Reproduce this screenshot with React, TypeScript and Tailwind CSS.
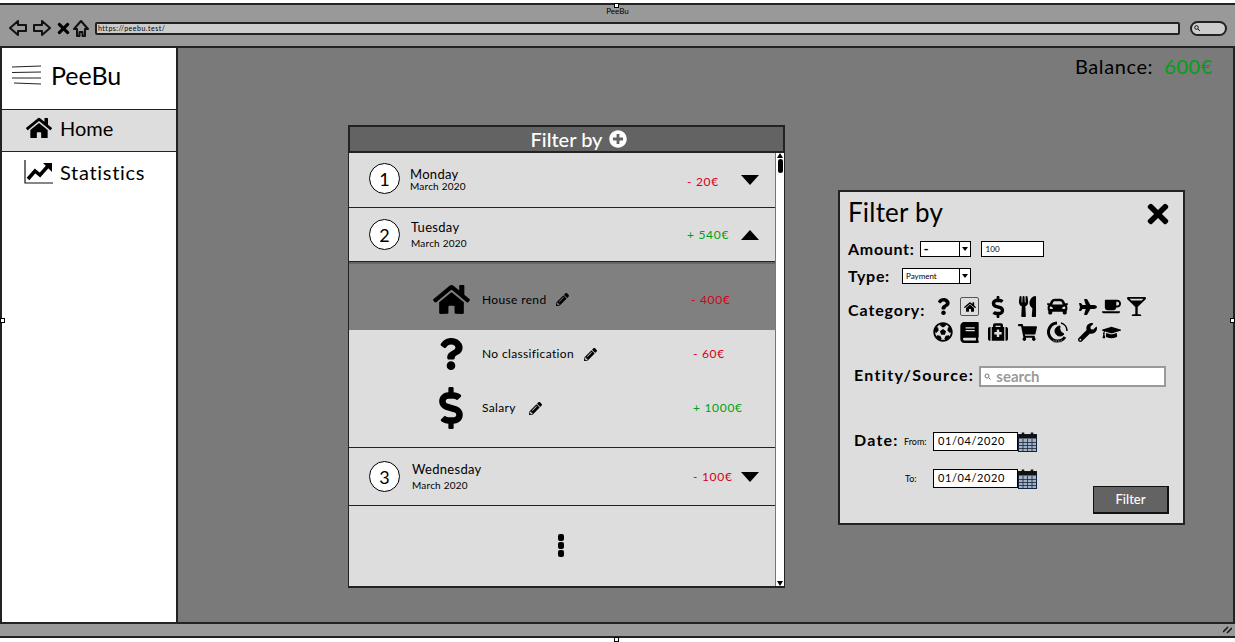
import { FaBook, FaCar, FaCoffee, FaDollarSign, FaFutbol, FaGlassMartiniAlt, FaGraduationCap, FaHome, FaMedkit, FaPencilAlt, FaPlane, FaPlusCircle, FaQuestion, FaShoppingCart, FaTimes, FaUtensils, FaWrench } from "react-icons/fa"

const font = "font-['Lato','Liberation_Sans',sans-serif]"

function Arrow({ d, w, className }: { d: string; w: number; className?: string }) {
    return (
        <svg width={w} height="22" viewBox={`0 0 ${w} 22`} fill="none" stroke="#111" strokeWidth="2" strokeLinejoin="round" className={`shrink-0 ${className ?? ""}`}>
            <path d={d} />
        </svg>
    )
}

function Chevron({ up }: { up?: boolean }) {
    return (
        <svg width="18" height="10" viewBox="0 0 18 10" className="shrink-0">
            <path d={up ? "M9 0 L18 10 L0 10 Z" : "M0 0 L18 0 L9 10 Z"} fill="#000" />
        </svg>
    )
}

function ChartIcon() {
    return (
        <svg width="30" height="24" viewBox="0 0 30 24" fill="none" className="shrink-0">
            <path d="M1 0 V23 H29" stroke="#111" strokeWidth="1.2" />
            <path d="M4 19 L11 11 L16 15 L24 6" stroke="#000" strokeWidth="3.500" />
            <path d="M19 3 H28 V12 Z" fill="#000" />
        </svg>
    )
}

function Globe() {
    return (
        <svg width="22" height="22" viewBox="0 0 22 22" fill="none" stroke="#000" className="shrink-0">
            <path d="M10 2 A9 9 0 1 0 18 16" strokeWidth="3" />
            <path d="M13 5 A5 5 0 1 0 17 13 A7 7 0 0 1 13 5 Z" fill="#000" strokeWidth="1" />
            <path d="M14 2 A8 8 0 0 1 20 10" strokeWidth="1.500" />
            <path d="M6 20 H16" strokeWidth="2.500" strokeDasharray="1.500 1" stroke="#555" />
        </svg>
    )
}

function Calendar() {
    return (
        <svg width="19" height="21" viewBox="0 0 19 21" className="shrink-0">
            <rect x="0.5" y="3.5" width="18" height="17" fill="#9fb4c8" stroke="#12233f" />
            <rect x="0.5" y="3.5" width="18" height="4" fill="#111" />
            <path d="M1 11.5H18M1 14.5H18M1 17.5H18M5 8V20M9.500 8V20M14 8V20" stroke="#223" strokeWidth="0.8" />
            <path d="M5 6V1.500M14 6V1.500" stroke="#111" strokeWidth="2.500" />
        </svg>
    )
}

type DayProps = {
    n: number
    name: string
    amount: string
    color: string
    up?: boolean
    rowClass: string
    textClass: string
    subClass: string
    circleClass: string
    amountClass: string
}

function Day({ n, name, amount, color, up, rowClass, textClass, subClass, circleClass, amountClass }: DayProps) {
    return (
        <div className={`flex shrink-0 items-center border-b border-[#222] pl-[20px] pr-[16px] ${rowClass}`}>
            <div className={`flex size-[31px] shrink-0 items-center justify-center rounded-full border border-black bg-white text-[18px] leading-none ${circleClass}`}>{n}</div>
            <div className={`flex flex-1 flex-col ${textClass}`}>
                <span className="text-[13px] leading-[15px] tracking-[0.3px]">{name}</span>
                <span className={`text-[10px] leading-[12px] tracking-[0.2px] ${subClass}`}>March 2020</span>
            </div>
            <span className={`text-[12px] tracking-[0.7px] ${color} ${amountClass}`}>{amount}</span>
            <Chevron up={up} />
        </div>
    )
}

type ItemProps = {
    icon: React.ReactNode
    label: string
    amount: string
    color: string
    active?: boolean
    className: string
    amountWidth: string
    pencilGap: string
}

function Item({ icon, label, amount, color, active, className, amountWidth, pencilGap }: ItemProps) {
    return (
        <div className={`flex shrink-0 items-center ${active ? "bg-[#808080]" : ""} ${className}`}>
            <div className="ml-[82px] flex w-[40px] shrink-0 justify-center">{icon}</div>
            <span className="ml-[11px] text-[12px] tracking-[0.35px]">{label}</span>
            <FaPencilAlt className={`shrink-0 text-[13px] ${pencilGap}`} />
            <span className={`ml-auto text-[12px] tracking-[0.7px] ${color} ${amountWidth}`}>{amount}</span>
        </div>
    )
}

function SelectBox({ text, className }: { text: string; className: string }) {
    return (
        <div className={`flex h-[16px] items-center justify-between border border-black bg-white pl-[3px] ${className}`}>
            <span className="leading-none">{text}</span>
            <div className="flex h-full w-[11px] items-center justify-center border-l border-black">
                <svg width="6" height="4" viewBox="0 0 6 4"><path d="M0 0H6L3 4Z" fill="#000" /></svg>
            </div>
        </div>
    )
}

function DateInput() {
    return (
        <div className="flex items-center">
            <div className="flex h-[19px] w-[85px] items-center border border-black bg-white pl-[4px] text-[11px] tracking-[0.6px]">01/04/2020</div>
            <Calendar />
        </div>
    )
}

function Handle({ className }: { className: string }) {
    return <div className={`absolute size-[5px] border border-black bg-white ${className}`} />
}

export default function App() {
    return (
        <div className={`relative flex h-[642px] w-[1235px] flex-col overflow-hidden bg-white pt-[3px] pb-[4px] text-black ${font}`}>
            <Handle className="top-[3px] left-[614px]" />
            <Handle className="top-[318px] left-0" />
            <Handle className="top-[318px] right-0" />
            <Handle className="bottom-0 left-[614px]" />
            <div className="flex h-[45px] shrink-0 flex-col border-y-2 border-[#222] bg-[#999999] pl-[8px] pr-[8px]">
                <div className="h-[9px] pt-[2px] text-center text-[8px] leading-[9px]">PeeBu</div>
                <div className="flex items-center pt-[3px]">
                    <Arrow w={20} d="M2 11 L10 4 V8 H18 V14 H10 V18 Z" />
                    <Arrow w={22} className="ml-[2px]" d="M20 11 L12 4 V8 H4 V14 H12 V18 Z" />
                    <FaTimes className="ml-[3px] text-[17px]" />
                    <Arrow w={18} d="M9 4 L16 12 H13 V19 H10.500 V15 H7.500 V19 H5 V12 H2 Z" />
                    <div className="ml-[5px] flex h-[13px] flex-1 items-center rounded-[2px] border-2 border-[#222] bg-[#cccccc] pl-[1px] text-[7px] tracking-[0.5px]">https://peebu.test/</div>
                    <div className="ml-[10px] flex h-[15px] w-[37px] shrink-0 items-center rounded-full border-2 border-[#222] bg-[#cccccc] pl-[2px]">
                        <svg width="6" height="6" viewBox="0 0 6 6" fill="none" stroke="#111" strokeWidth="1"><circle cx="2.500" cy="2.500" r="1.800" /><path d="M4 4L6 6" /></svg>
                    </div>
                </div>
            </div>
            <div className="flex min-h-0 flex-1 border-x-2 border-[#222]">
                <div className="flex w-[176px] shrink-0 flex-col border-r-2 border-[#222] bg-white">
                    <div className="flex h-[62px] shrink-0 items-center gap-[10px] border-b border-[#222] pb-[7px] pl-[9px]">
                        <svg width="30" height="20" viewBox="0 0 30 20" stroke="#222" strokeWidth="1" className="shrink-0">
                            <path d="M1 2 L30 1M1 7.500 L30 7M1 13 L30 13M3 18 L30 19" />
                        </svg>
                        <span className="text-[25px] leading-none">PeeBu</span>
                    </div>
                    <div className="flex h-[42px] shrink-0 items-center gap-[8px] border-b border-[#222] bg-[#dddddd] pb-[5px] pl-[24px] text-[20px]">
                        <FaHome className="text-[26px]" />
                        <span>Home</span>
                    </div>
                    <div className="flex h-[43px] shrink-0 items-center gap-[6px] pb-[4px] pl-[22px] text-[20px] tracking-[0.7px]">
                        <ChartIcon />
                        <span>Statistics</span>
                    </div>
                </div>
                <div className="flex min-w-0 flex-1 flex-col bg-[#7a7a7a]">
                    <div className="flex justify-end gap-[11px] pt-[6px] pr-[20px] text-[20px] leading-[24px] tracking-[0.6px]">
                        <span>Balance:</span>
                        <span className="text-[#00a012]">600€</span>
                    </div>
                    <div className="flex items-start">
                        <div className="ml-[170px] mt-[47px] flex h-[463px] w-[437px] shrink-0 flex-col">
                            <div className="flex h-[28px] shrink-0 items-center justify-center gap-[6px] border-2 border-[#222] bg-[#636363] pl-[24px] text-[20px] font-medium text-white">
                                <span>Filter by</span>
                                <FaPlusCircle className="text-[18px]" />
                            </div>
                            <div className="flex min-h-0 flex-1 border-x border-b-2 border-[#222] bg-[#dddddd]">
                                <div className="flex min-w-0 flex-1 flex-col">
                                    <Day n={1} name="Monday" amount="- 20€" color="text-[#d6001c]" rowClass="h-[55px]" textClass="ml-[10px] -mt-[1px]" subClass="-mt-[2px]" circleClass="-mt-[3px]" amountClass="mt-[3px] w-[54px]" />
                                    <Day n={2} name="Tuesday" amount="+ 540€" color="text-[#00a012]" up rowClass="h-[54px]" textClass="ml-[11px]" subClass="mt-[2px]" circleClass="" amountClass="w-[54px]" />
                                    <Item active className="h-[68px] border-t-2 border-[#666] pt-[5px]" icon={<FaHome className="text-[37px]" />} label="House rend" amount="- 400€" color="text-[#d6001c]" amountWidth="w-[84px]" pencilGap="ml-[10px]" />
                                    <Item className="h-[48px]" icon={<FaQuestion className="text-[32px]" />} label="No classification" amount="- 60€" color="text-[#d6001c]" amountWidth="w-[82px]" pencilGap="ml-[10px]" />
                                    <Item className="h-[60px]" icon={<FaDollarSign className="text-[42px]" />} label="Salary" amount="+ 1000€" color="text-[#00a012]" amountWidth="w-[82px]" pencilGap="ml-[13px]" />
                                    <div className="h-[10px] shrink-0 border-b border-[#222]" />
                                    <Day n={3} name="Wednesday" amount="- 100€" color="text-[#d6001c]" rowClass="h-[58px]" textClass="ml-[12px]" subClass="mt-[2px]" circleClass="" amountClass="w-[48px]" />
                                    <div className="flex flex-1 items-center justify-center pb-[2px]">
                                        <div className="ml-[-2px] flex flex-col gap-[1px]">
                                            <div className="h-[7px] w-[6px] rounded-[2px] bg-black" />
                                            <div className="h-[7px] w-[6px] rounded-[2px] bg-black" />
                                            <div className="h-[7px] w-[6px] rounded-[2px] bg-black" />
                                        </div>
                                    </div>
                                </div>
                                <div className="flex w-[9px] shrink-0 flex-col items-center justify-between border-l border-[#777] bg-white">
                                    <div className="flex flex-col items-center">
                                        <svg width="6" height="5" viewBox="0 0 6 5"><path d="M3 0L6 5H0Z" fill="#000" /></svg>
                                        <div className="mt-[1px] h-[14px] w-[5px] rounded-full bg-black" />
                                    </div>
                                    <svg width="6" height="5" viewBox="0 0 6 5"><path d="M0 0H6L3 5Z" fill="#000" /></svg>
                                </div>
                            </div>
                        </div>
                        <div className="ml-[53px] mt-[112px] flex h-[335px] w-[347px] shrink-0 flex-col border-2 border-[#222] bg-[#dddddd] pl-[8px]">
                            <div className="flex items-center justify-between pt-[3px] pr-[10px]">
                                <span className="text-[26px] leading-[28px] tracking-[0.2px]">Filter by</span>
                                <FaTimes className="mt-[4px] text-[30px]" />
                            </div>
                            <div className="mt-[11px] flex h-[18px] items-center text-[16px] font-bold tracking-[0.7px]">
                                <span>Amount:</span>
                                <SelectBox text="-" className="ml-[5px] w-[51px] text-[14px] tracking-normal" />
                                <div className="ml-[10px] flex h-[16px] w-[63px] items-center border border-black bg-white pl-[4px] text-[8px] leading-none font-normal tracking-normal">100</div>
                            </div>
                            <div className="mt-[9px] flex h-[18px] items-center text-[16px] font-bold tracking-[0.7px]">
                                <span>Type:</span>
                                <SelectBox text="Payment" className="ml-[12px] w-[69px] text-[8px] font-normal tracking-normal" />
                            </div>
                            <div className="mt-[11px] flex items-start">
                                <span className="mt-[2px] w-[85px] shrink-0 text-[16px] font-bold tracking-[0.9px]">Category:</span>
                                <div className="flex flex-col gap-[4px]">
                                    <div className="flex h-[21px] items-center">
                                        <FaQuestion className="ml-[2px] text-[17px]" />
                                        <div className="ml-[8px] flex size-[19px] items-center justify-center rounded-[2px] border border-[#555] text-[12px]"><FaHome /></div>
                                        <FaDollarSign className="ml-[8px] text-[22px]" />
                                        <FaUtensils className="ml-[8px] text-[21px]" />
                                        <FaCar className="ml-[9px] text-[21px]" />
                                        <FaPlane className="ml-[11px] text-[18px]" />
                                        <FaCoffee className="ml-[5px] text-[19px]" />
                                        <FaGlassMartiniAlt className="ml-[6px] text-[19px]" />
                                    </div>
                                    <div className="flex h-[22px] items-center">
                                        <FaFutbol className="text-[20px]" />
                                        <FaBook className="ml-[6px] text-[21px]" />
                                        <FaMedkit className="ml-[8px] text-[20px]" />
                                        <FaShoppingCart className="ml-[10px] text-[19px]" />
                                        <div className="ml-[10px]"><Globe /></div>
                                        <FaWrench className="ml-[9px] text-[19px]" />
                                        <FaGraduationCap className="ml-[5px] text-[19px]" />
                                    </div>
                                </div>
                            </div>
                            <div className="mt-[23px] flex items-center pl-[6px]">
                                <span className="-mt-[4px] text-[16px] font-bold tracking-[1.3px]">Entity/Source:</span>
                                <div className="ml-[5px] flex h-[21px] w-[187px] items-center gap-[5px] border-2 border-[#9a9a9a] bg-white pl-[3px] text-[15px] font-bold text-[#9a9a9a]">
                                    <svg width="7" height="7" viewBox="0 0 7 7" fill="none" stroke="#777"><circle cx="3" cy="3" r="2" /><path d="M4.500 4.500L6.500 6.500" /></svg>
                                    <span>search</span>
                                </div>
                            </div>
                            <div className="mt-[44px] flex items-center pl-[6px]">
                                <span className="-mt-[3px] w-[50px] text-[16px] font-bold tracking-[1.2px]">Date:</span>
                                <span className="w-[29px] text-[9px]">From:</span>
                                <DateInput />
                            </div>
                            <div className="mt-[16px] flex items-center pl-[57px]">
                                <span className="w-[28px] text-[9px]">To:</span>
                                <DateInput />
                            </div>
                            <div className="-mt-[3px] flex justify-end pr-[14px]">
                                <button className="h-[28px] w-[76px] border-t border-r-2 border-b-2 border-l border-[#111] bg-[#636363] text-[13px] font-medium text-white">Filter</button>
                            </div>
                        </div>
                    </div>
                </div>
            </div>
            <div className="flex h-[16px] shrink-0 items-center justify-end border-y-2 border-[#222] bg-[#999999] pr-[3px]">
                <svg width="9" height="8" viewBox="0 0 9 8" stroke="#111" strokeWidth="1.500"><path d="M0 6L5 1M4 7L9 2" /></svg>
            </div>
        </div>
    )
}
